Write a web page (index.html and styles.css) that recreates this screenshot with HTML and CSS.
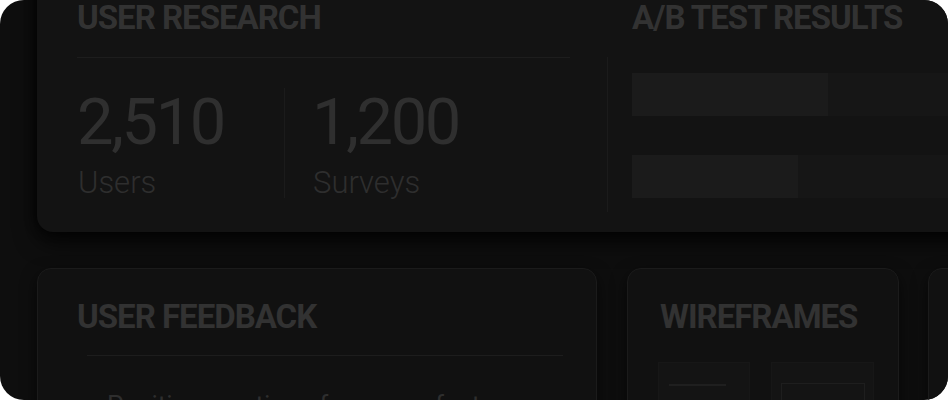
FILE: index.html
```html
<!DOCTYPE html>
<html lang="en">
<head>
<meta charset="utf-8">
<title>Dashboard</title>
<link rel="stylesheet" href="styles.css">
</head>
<body>
<div class="screen">
  <div class="content">
    <section class="top-card">
      <div class="research">
        <h2 class="heading">USER RESEARCH</h2>
        <div class="rule"></div>
        <div class="stats">
          <div class="stat stat-first">
            <div class="num">2,510</div>
            <div class="label">Users</div>
          </div>
          <div class="stat stat-second">
            <div class="num">1,200</div>
            <div class="label">Surveys</div>
          </div>
        </div>
      </div>
      <div class="vdivider"></div>
      <div class="abtest">
        <h2 class="heading">A/B TEST RESULTS</h2>
        <div class="bars">
          <div class="bar"><div class="fill" style="width:196px"></div></div>
          <div class="bar"><div class="fill" style="width:166px"></div></div>
        </div>
      </div>
    </section>
    <div class="row">
      <section class="card feedback">
        <h2 class="heading">USER FEEDBACK</h2>
        <div class="rule rule-inset"></div>
        <p class="quote">Positive reactions from new features</p>
      </section>
      <section class="card wireframes">
        <h2 class="heading">WIREFRAMES</h2>
        <div class="frames">
          <div class="frame frame-a"><div class="frame-line"></div></div>
          <div class="frame frame-b"><div class="frame-box"></div></div>
        </div>
      </section>
      <section class="card extra"></section>
    </div>
  </div>
</div>
</body>
</html>
```

FILE: styles.css
```css
* { box-sizing: border-box; }
html, body { margin: 0; padding: 0; background: #ffffff; }
body { font-family: Roboto, "Noto Sans", sans-serif; }

.screen {
  width: 948px;
  height: 400px;
  background: #0e0e0e;
  border-radius: 24px;
  overflow: hidden;
}

.content {
  margin-top: -38px;
  padding-left: 37px;
  display: flex;
  flex-direction: column;
  gap: 36px;
}

.heading {
  margin: 0;
  font-size: 33px;
  line-height: 34px;
  font-weight: 700;
  letter-spacing: -1px;
  color: #323232;
  white-space: nowrap;
}

.top-card {
  width: 1000px;
  height: 270px;
  flex: none;
  background: #131313;
  border-radius: 16px;
  box-shadow: 0 10px 22px rgba(0, 0, 0, 0.75), -2px 0 10px rgba(0, 0, 0, 0.5);
  padding: 39px 0 0 40px;
  display: flex;
}

.research { width: 493px; flex: none; }

.rule {
  height: 1px;
  background: #1d1d1d;
  margin-top: 22px;
}

.stats {
  display: flex;
  margin-top: 30px;
}

.stat {
  height: 110px;
  padding-top: 2px;
}
.stat-first {
  width: 208px;
  border-right: 1px solid #1b1b1b;
}
.stat-second { padding-left: 27px; }

.num {
  font-size: 65px;
  line-height: 64px;
  font-weight: 400;
  letter-spacing: -2.4px;
  color: #2f2f2f;
}
.label {
  margin-top: 11px;
  font-size: 31px;
  line-height: 36px;
  font-weight: 300;
  color: #2e2e2e;
  padding-left: 1px;
}

.vdivider {
  width: 1px;
  height: 155px;
  margin: 56px 0 0 37px;
  background: #1b1b1b;
}

.abtest {
  padding-left: 24px;
  flex: 1;
}

.bars {
  margin-top: 38px;
  display: flex;
  flex-direction: column;
  gap: 39px;
}
.bar {
  height: 43px;
  background: #161616;
}
.fill {
  height: 100%;
  background: #1b1b1b;
}

.row {
  display: flex;
  gap: 30px;
}

.card {
  height: 160px;
  flex: none;
  background: #111111;
  border: 1px solid #1b1b1b;
  border-radius: 14px;
  box-shadow: 0 6px 16px rgba(0, 0, 0, 0.6);
  padding-top: 31px;
}

.feedback {
  width: 560px;
  padding-left: 39px;
}
.rule-inset {
  margin: 21px 0 0 10px;
  width: 476px;
}
.quote {
  margin: 33px 0 0 30px;
  font-size: 26px;
  line-height: 32px;
  color: #2e2e2e;
  white-space: nowrap;
}

.wireframes {
  width: 272px;
  padding-left: 32px;
}
.frames {
  display: flex;
  gap: 21px;
  margin-top: 28px;
  margin-left: -2px;
}
.frame {
  height: 80px;
  background: #141414;
  border: 1px solid #171717;
}
.frame-a { width: 92px; padding: 21px 0 0 10px; }
.frame-b { width: 103px; padding: 20px 0 0 9px; }
.frame-line {
  width: 57px;
  height: 2px;
  background: #1f1f1f;
}
.frame-box {
  width: 84px;
  height: 60px;
  border: 1px solid #1e1e1e;
}

.extra {
  width: 200px;
  margin-left: -1px;
}
```
